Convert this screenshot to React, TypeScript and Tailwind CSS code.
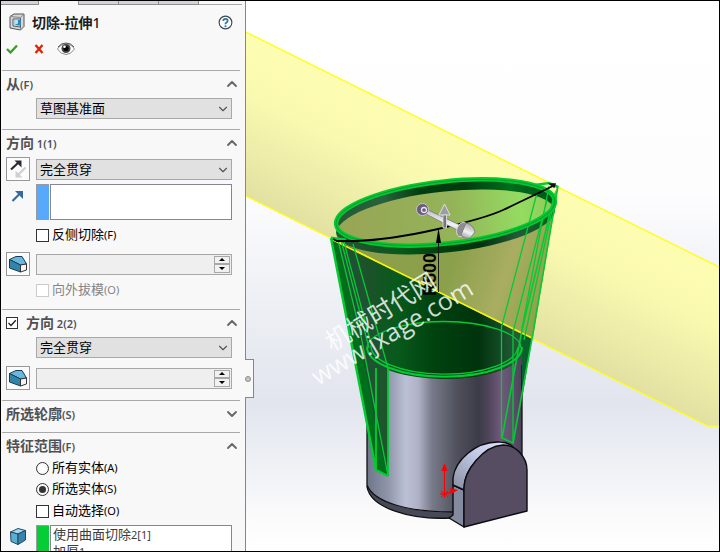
import type { ReactNode } from "react";
import { ChevronDown, ChevronUp } from "lucide-react";
import { clsx } from "clsx";

const fontStack = "font-['Noto_Sans','Noto_Sans_CJK_SC',sans-serif]";

function Suffix({ children }: { children: ReactNode }) {
  return <span className="text-[11px]">{children}</span>;
}

function Section({
  title,
  suffix,
  open = true,
  toggle = false,
  className,
  children,
}: {
  title: string;
  suffix: string;
  open?: boolean;
  toggle?: boolean;
  className?: string;
  children?: ReactNode;
}) {
  const Icon = open ? ChevronUp : ChevronDown;
  return (
    <section className={clsx("mr-[5px] ml-px border-t border-[#a9a9ab]", className)}>
      <div className="flex h-[26px] items-center pl-1">
        {toggle && <Tick label={title} checked className="mr-[8px] size-3" />}
        <h2 className="flex-1 pb-[2px] text-[14px] font-bold text-[#505054]">
          {title}
          <span className="text-[11px] font-semibold">{suffix}</span>
        </h2>
        <button type="button" aria-label={title} aria-expanded={open} className="text-[#68686b]">
          <Icon className="h-4 w-4" strokeWidth={2.8} />
        </button>
      </div>
      {children}
    </section>
  );
}

function Tick({
  id,
  label,
  checked,
  disabled,
  className,
}: {
  id?: string;
  label?: string;
  checked?: boolean;
  disabled?: boolean;
  className?: string;
}) {
  return (
    <span className={clsx("relative inline-flex shrink-0", className)}>
      <input
        id={id}
        type="checkbox"
        aria-label={label}
        defaultChecked={checked}
        disabled={disabled}
        className="size-full appearance-none border border-[#333] bg-white disabled:border-[#ccc]"
      />
      {checked && (
        <svg viewBox="0 0 12 12" className="pointer-events-none absolute inset-0" fill="none" stroke="#222" strokeWidth="1.3">
          <path d="M2.5 6 5 8.5 9.8 3.2" />
        </svg>
      )}
    </span>
  );
}

function CheckRow({ id, label, suffix, disabled }: { id: string; label: string; suffix: string; disabled?: boolean }) {
  return (
    <div className="flex h-5 items-center gap-[3px] pl-[34px]">
      <Tick id={id} disabled={disabled} className="size-[13px]" />
      <label htmlFor={id} className={disabled ? "text-[#858585]" : "text-black"}>
        {label}
        <Suffix>{suffix}</Suffix>
      </label>
    </div>
  );
}

function RadioRow({ id, label, suffix, checked }: { id: string; label: string; suffix: string; checked?: boolean }) {
  return (
    <div className="flex h-[18px] items-center gap-[3px] pl-[34px]">
      <input
        id={id}
        type="radio"
        name="scope"
        defaultChecked={checked}
        className="size-[13px] appearance-none rounded-full border border-[#333] bg-white bg-clip-content p-[2px] checked:bg-[#333]"
      />
      <label htmlFor={id}>
        {label}
        <Suffix>{suffix}</Suffix>
      </label>
    </div>
  );
}

function Row({ icon, children }: { icon?: ReactNode; children: ReactNode }) {
  return (
    <div className="flex items-center gap-[6px] pr-2 pl-1">
      <div className="flex w-6 shrink-0 justify-center">{icon}</div>
      {children}
    </div>
  );
}

function Picker({ label, value }: { label: string; value: string }) {
  return (
    <div className="relative h-[21px] min-w-0 flex-1">
      <select
        aria-label={label}
        className="block h-[21px] w-full appearance-none border border-[#a8a8a8] bg-[#e1e1e1] pl-[3px] text-[13px] leading-[19px] text-black"
      >
        <option>{value}</option>
      </select>
      <ChevronDown className="pointer-events-none absolute top-[4px] right-[2px] h-[14px] w-[14px] text-[#555]" />
    </div>
  );
}

function Spinner({ label }: { label: string }) {
  return (
    <div className="flex h-[21px] min-w-0 flex-1 border border-[#a8a8a8] bg-[#efefef] p-px">
      <input aria-label={label} disabled className="w-0 min-w-0 flex-1 bg-transparent" />
      <div className="flex w-4 shrink-0 flex-col">
        {["M5 1 8 4H2z", "M2 1h6L5 4z"].map((d, i) => (
          <button
            key={d}
            type="button"
            aria-label={i === 0 ? "增加" : "减少"}
            className="flex min-h-0 flex-1 items-center justify-center border border-[#a8a8a8] bg-[#f1f1f1]"
          >
            <svg viewBox="0 0 10 5" className="h-[5px] w-[10px]">
              <path d={d} />
            </svg>
          </button>
        ))}
      </div>
    </div>
  );
}

function ToolButton({ label, children }: { label: string; children: ReactNode }) {
  return (
    <button type="button" aria-label={label} className="flex size-6 items-center justify-center border border-[#98989b] bg-[#fcfcfc]">
      {children}
    </button>
  );
}

function ReverseIcon() {
  return (
    <svg viewBox="0 0 22 22" className="size-[22px]">
      <path d="M18.500 9.500 11 17" stroke="#cfcfcf" strokeWidth="2.200" />
      <path d="M8.500 12.500v7h7z" fill="#cfcfcf" />
      <path d="M4 11.500 11 5" stroke="#2c2c34" strokeWidth="2.200" />
      <path d="M7.500 2.500h7v7z" fill="#2c2c34" />
    </svg>
  );
}

function DirectionIcon() {
  return (
    <svg viewBox="0 0 14 14" className="size-[14px]">
      <path d="M1.500 12 8 5.500" stroke="#34699d" strokeWidth="2.200" />
      <path d="M4 2h8v8z" fill="#34699d" />
    </svg>
  );
}

function DraftIcon() {
  return (
    <svg viewBox="0 0 20 18" className="h-[18px] w-5 shrink-0" strokeLinejoin="round" stroke="#173d52">
      <path d="M1.500 4.500 8 1.500 14 1.500 18.500 9 12.500 10z" fill="#68b7df" />
      <path d="M1.500 4.500 12.500 10v7L1.500 13z" fill="#3185aa" />
      <path d="M12.500 10 18.500 9v6l-6 2z" fill="#f5f5f5" stroke="#333" />
    </svg>
  );
}

function BodyIcon() {
  return (
    <svg viewBox="0 0 18 19" className="h-[19px] w-[18px]" strokeLinejoin="round" stroke="#1d4a63">
      <path d="M1.500 5 9 1.500l7.500 2L9 7z" fill="#a5d8ef" />
      <path d="M1.500 5 9 7v10.500L2 14.500z" fill="#5badd2" />
      <path d="M9 7 16.500 3.500V13L9 17.500z" fill="#3b83aa" />
    </svg>
  );
}

function CutIcon() {
  return (
    <svg viewBox="0 0 16 18" className="h-[18px] w-4" strokeLinejoin="round">
      <path d="M1 3.500 5 1h10v12.500L11.500 17 1 15z" fill="#d5d7da" stroke="#555" />
      <path d="M1 3.500 11.500 4.500 15 1M11.500 17V4.500" stroke="#888" fill="none" />
      <path d="M4 6h7.500v8L4 13z" fill="#f7f7f7" stroke="#555" />
      <path d="M5.500 7H12v5.500L9 12.500 5.500 12z" fill="#2f86b2" />
      <path d="M5.500 7H9v3.500l-3.500 1.500z" fill="#b8e2f3" />
    </svg>
  );
}

function EyeIcon() {
  return (
    <svg viewBox="0 0 18 14" className="h-[14px] w-[18px]">
      <path d="M.5 7Q3.500 2 9 2t8.500 5Q14 12.500 9 12.500T.5 7z" fill="#fff" stroke="#8a8a8a" />
      <path d="M1 5Q4 1 9 1t8 4" fill="none" stroke="#555" />
      <circle cx="9" cy="6.500" r="4.500" fill="#444" />
      <circle cx="9" cy="6.500" r="2.600" fill="#050505" />
      <circle cx="7.500" cy="4.800" r="1.300" fill="#fff" />
    </svg>
  );
}

function PropertyPanel() {
  return (
    <aside className="relative flex w-[245px] shrink-0 flex-col border-r border-[#85858a] bg-[#f8f8f9] text-[13px] text-black">
      <div className="min-h-0 flex-1 overflow-hidden">
        <div className="flex h-[4px]">
          <div className="w-[38px] border-r border-b border-[#8e8e93] bg-[#d4d4d8]" />
          <div className="w-[39px]" />
          <div className="w-[41px] border-x border-b border-[#8e8e93] bg-[#d4d4d8]" />
          <div className="w-[40px] border-r border-b border-[#8e8e93] bg-[#d4d4d8]" />
          <div className="w-[40px] border-r border-b border-[#8e8e93] bg-[#d4d4d8]" />
          <div className="mr-[3px] flex-1 border-b border-[#a9a9ab]" />
        </div>
        <div className="flex h-[34px] items-center pr-3 pl-2">
          <CutIcon />
          <h1 className="ml-[7px] flex-1 text-[14px] font-bold text-[#1c1c20]">
            切除-拉伸<span className="font-medium">1</span>
          </h1>
          <button type="button" aria-label="帮助">
            <svg viewBox="0 0 16 16" className="size-[15px]">
              <circle cx="8" cy="8" r="6.800" fill="#fafafa" stroke="#3a4652" strokeWidth="1.200" />
              <path d="M5.700 6.300Q5.700 4.200 8 4.200t2.300 1.900Q10.300 7.300 9 8T8 9.900" fill="none" stroke="#2874a6" strokeWidth="1.800" />
              <circle cx="8" cy="12" r="1.100" fill="#2874a6" />
            </svg>
          </button>
        </div>
        <div className="flex h-[31px] items-start gap-4 pt-[3px] pl-[5px]">
          <button type="button" aria-label="确定" className="flex h-[14px] items-center">
            <svg viewBox="0 0 12 10" className="h-[10px] w-3">
              <path d="M1 5 4.500 8.500 11 1.500" fill="none" stroke="#35a01e" strokeWidth="2.300" />
            </svg>
          </button>
          <button type="button" aria-label="取消" className="flex h-[14px] items-center">
            <svg viewBox="0 0 10 10" className="size-[10px]">
              <path d="M1.500 1 8.500 9M8.500 1 1.500 9" stroke="#df2307" strokeWidth="2.300" />
            </svg>
          </button>
          <button type="button" aria-label="预览" className="-ml-[3px]">
            <EyeIcon />
          </button>
        </div>

        <Section title="从" suffix="(F)" className="pb-[10px]">
          <div className="pt-px">
            <Row>
              <Picker label="从" value="草图基准面" />
            </Row>
          </div>
        </Section>

        <Section title="方向" suffix=" 1(1)" className="pb-[9px]">
          <div className="pt-px">
            <Row
              icon={
                <ToolButton label="反向">
                  <ReverseIcon />
                </ToolButton>
              }
            >
              <Picker label="方向 1" value="完全贯穿" />
            </Row>
          </div>
          <div className="mt-[3px] flex gap-[6px] pr-2 pl-1">
            <div className="flex w-6 shrink-0 justify-center pt-[5px]">
              <DirectionIcon />
            </div>
            <div className="flex h-9 min-w-0 flex-1 gap-px">
              <div className="w-[13px] shrink-0 border-t border-l border-[#9a9aa0] bg-[#57a9fc]" />
              <input aria-label="拉伸方向" className="w-0 min-w-0 flex-1 border border-[#858594] bg-white" />
            </div>
          </div>
          <div className="mt-[5px] mb-[7px]">
            <CheckRow id="flip" label="反侧切除" suffix="(F)" />
          </div>
          <Row
            icon={
              <ToolButton label="拔模开关">
                <DraftIcon />
              </ToolButton>
            }
          >
            <Spinner label="拔模角度" />
          </Row>
          <div className="mt-1">
            <CheckRow id="outward" label="向外拔模" suffix="(O)" disabled />
          </div>
        </Section>

        <Section title="方向" suffix=" 2(2)" toggle className="pb-[10px]">
          <div className="pt-px pb-2">
            <Row>
              <Picker label="方向 2" value="完全贯穿" />
            </Row>
          </div>
          <Row
            icon={
              <ToolButton label="拔模开关 2">
                <DraftIcon />
              </ToolButton>
            }
          >
            <Spinner label="拔模角度 2" />
          </Row>
        </Section>

        <Section title="所选轮廓" suffix="(S)" open={false} className="pb-[5px]" />

        <Section title="特征范围" suffix="(F)">
          <div className="flex flex-col gap-[3px]">
            <RadioRow id="all" label="所有实体" suffix="(A)" />
            <RadioRow id="selected" label="所选实体" suffix="(S)" checked />
            <CheckRow id="auto" label="自动选择" suffix="(O)" />
          </div>
          <div className="mt-1 flex gap-[6px] pr-2 pl-1">
            <div className="flex w-6 shrink-0 justify-center pt-[2px]">
              <BodyIcon />
            </div>
            <div className="flex h-[60px] min-w-0 flex-1 gap-px">
              <div className="w-[13px] shrink-0 border-t border-l border-[#9a9aa0] bg-[#06cc36]" />
              <ul className="flex-1 border border-[#858594] bg-white pl-[2px] leading-4 text-[#3c3c3c]">
                <li>
                  使用曲面切除<Suffix>2[1]</Suffix>
                </li>
                <li>
                  加厚<Suffix>1</Suffix>
                </li>
              </ul>
            </div>
          </div>
        </Section>
      </div>
      <button
        type="button"
        aria-label="收起面板"
        className="absolute top-[358px] -right-[9px] z-10 flex h-[39px] w-[9px] items-center border border-l-0 border-[#85858a] bg-[#f8f8f9]"
      >
        <span className="size-[6px] rounded-full border border-[#8c8c8c] bg-[#c6c6c6]" />
      </button>
    </aside>
  );
}

// Opening of the tapered cut; used for the rim and, shifted down, for the wall thickness.
function Rim({ dy = 0, rx = 110, ry = 31, ...rest }: { dy?: number; rx?: number; ry?: number; fill?: string; stroke?: string; strokeWidth?: number; clipPath?: string }) {
  return (
    <g clipPath={rest.clipPath}>
      <ellipse
        cx="445.500"
        cy={212.5 + dy}
        rx={rx}
        ry={ry}
        transform={`rotate(-6.200 445.500 ${212.5 + dy})`}
        fill={rest.fill ?? "none"}
        stroke={rest.stroke}
        strokeWidth={rest.strokeWidth}
      />
    </g>
  );
}

function ModelView() {
  return (
    <svg viewBox="246 1 473 550" preserveAspectRatio="xMidYMid slice" className="size-full" fill="none">
      <defs>
        <linearGradient id="sky" x1="0" y1="0" x2="0" y2="1">
          <stop offset="0" stopColor="#fff" />
          <stop offset=".35" stopColor="#fdfdfe" />
          <stop offset=".52" stopColor="#f0f1f6" />
          <stop offset=".73" stopColor="#e2e5ee" />
          <stop offset=".84" stopColor="#eef0f5" />
          <stop offset=".93" stopColor="#fafafb" />
          <stop offset="1" stopColor="#fff" />
        </linearGradient>
        <linearGradient id="plane" gradientUnits="userSpaceOnUse" x1="430" y1="124" x2="360" y2="265">
          <stop offset="0" stopColor="#fdfdb2" />
          <stop offset=".35" stopColor="#faf9b0" />
          <stop offset="1" stopColor="#dfdea0" />
        </linearGradient>
        <linearGradient id="metal" gradientUnits="userSpaceOnUse" x1="367" y1="0" x2="522" y2="0">
          <stop offset="0" stopColor="#70768a" />
          <stop offset=".14" stopColor="#9197aa" />
          <stop offset=".25" stopColor="#bcc0d6" />
          <stop offset=".33" stopColor="#b0b2c6" />
          <stop offset=".42" stopColor="#777a89" />
          <stop offset=".58" stopColor="#50515d" />
          <stop offset=".72" stopColor="#3c3b48" />
          <stop offset=".79" stopColor="#51465c" />
          <stop offset=".86" stopColor="#70597a" />
          <stop offset=".93" stopColor="#5f526e" />
          <stop offset="1" stopColor="#494358" />
        </linearGradient>
        <linearGradient id="deep" gradientUnits="userSpaceOnUse" x1="335" y1="0" x2="555" y2="0">
          <stop offset="0" stopColor="#245a34" />
          <stop offset=".15" stopColor="#1c5229" />
          <stop offset=".28" stopColor="#085a1c" />
          <stop offset=".45" stopColor="#00420f" />
          <stop offset=".65" stopColor="#00330c" />
          <stop offset=".82" stopColor="#245a38" />
          <stop offset="1" stopColor="#00601a" />
        </linearGradient>
        <linearGradient id="wallBack" gradientUnits="userSpaceOnUse" x1="335" y1="0" x2="555" y2="0">
          <stop offset="0" stopColor="#245a34" />
          <stop offset=".23" stopColor="#28613d" />
          <stop offset=".4" stopColor="#003e10" />
          <stop offset=".6" stopColor="#003b0f" />
          <stop offset=".8" stopColor="#006d1c" />
          <stop offset="1" stopColor="#00551a" />
        </linearGradient>
        <linearGradient id="olive" gradientUnits="userSpaceOnUse" x1="335" y1="0" x2="555" y2="0">
          <stop offset="0" stopColor="#98a455" />
          <stop offset=".55" stopColor="#94b458" />
          <stop offset=".85" stopColor="#94dc62" />
          <stop offset="1" stopColor="#8fc957" />
        </linearGradient>
        <linearGradient id="oliveFront" gradientUnits="userSpaceOnUse" x1="350" y1="230" x2="555" y2="300">
          <stop offset="0" stopColor="#8b9f4b" />
          <stop offset=".5" stopColor="#8ba04b" />
          <stop offset=".75" stopColor="#a9ad62" />
          <stop offset="1" stopColor="#87a043" />
        </linearGradient>
        <linearGradient id="bossSide" x1="0" y1="1" x2="1" y2="0">
          <stop offset="0" stopColor="#878ea1" />
          <stop offset=".6" stopColor="#c6cdea" />
          <stop offset="1" stopColor="#e1e6fa" />
        </linearGradient>
        <linearGradient id="shaft" x1="0" y1="1" x2=".4" y2="0">
          <stop offset="0" stopColor="#8d8d92" />
          <stop offset=".5" stopColor="#f2f2f4" />
          <stop offset="1" stopColor="#aaaab0" />
        </linearGradient>
        <clipPath id="rimClip">
          <ellipse cx="445.500" cy="212.500" rx="110" ry="31" transform="rotate(-6.200 445.500 212.500)" />
        </clipPath>
      </defs>

      <rect x="246" y="1" width="473" height="550" fill="url(#sky)" />
      <path d="M246 32 719 267V426h-11L246 196z" fill="url(#plane)" />
      <path d="M246 32 719 267M719 426h-11L246 196" stroke="#ffff12" strokeWidth="1.300" />

      {/* cylinder */}
      <path d="M367 349V487C371 507 405 518 444 519L522 490V349A77 27 0 0 0 367 349z" fill="url(#metal)" />
      <path d="M367 485C374 503 410 512 453 513v5C413 520 373 509 368 491z" fill="#484957" />
      <path d="M367 425V487C371 508 410 520 450 518M367 485C374 503 410 512 453 512M522 365V456" stroke="#111" strokeWidth="1.300" />

      {/* tapered cut, lower part */}
      <path d="M331 239 522 334 522 350A77 27 0 0 1 388 370L388 476 376 470z" fill="url(#deep)" />
      <path d="M331 239 338 242 388 476 376 470z" fill="#006f1c" />
      <path d="M344 241 353 244 388 368V476L376 430z" fill="#1e5230" />
      <path d="M376 368 388 372V476L376 420z" fill="#1d552d" />
      <path d="M522 334 533 332 522 400z" fill="#09602a" />

      {/* tapered cut seen through the plane */}
      <path d="M334 239 380 248 460 247 540 220 558 186 533 338 522 334z" fill="url(#oliveFront)" />
      <Rim dy={9} fill="url(#deep)" />
      <Rim fill="url(#wallBack)" />
      <Rim dy={10} fill="url(#olive)" clipPath="url(#rimClip)" />
      <path d="M331 239 534 339" stroke="#f6f600" strokeWidth="1.500" />

      <g stroke="#05ca35" strokeWidth="1.300">
        <path d="M367 349A77 27 0 0 1 521 348" />
        <path d="M367 347A77 29.500 0 0 0 522 347" strokeWidth="2" />
        <path d="M371 345A73 28 0 0 0 518 347" />
        <path d="M376 368V470M388 368V476" strokeWidth="1.800" />
        <path d="M338 240 361 336 388 476M341 240 369 348M344 242 370 340M353 244 388 368" />
        <path d="M331 238 376 470 388 476" strokeWidth="2.400" />
        <path d="M331 238 346 240" strokeWidth="3" />
        <path d="M558 186 533 333 513 443 502 438 522 330 553 200" strokeWidth="1.600" />
        <path d="M537 193 501.500 327V438M547 200 513 332V443M553 206 524 340M549 186 522 328" />
        <path d="M535 185 549 183 558 187" strokeWidth="2.500" />
      </g>
      <Rim stroke="#04c832" strokeWidth={4.5} />
      <Rim stroke="#0a8127" strokeWidth={0.6} />

      {/* sketch arc and its radius dimension */}
      <path d="M333 239 337 241 355 241Q390 240 438 229T503 210 555 185" stroke="#000" strokeWidth="1.800" />
      <path d="M550 184 555 184 554 187z" fill="#111" stroke="#111" strokeWidth="1.500" />
      <path d="M438.500 292V231" stroke="#1b1b1b" />
      <path d="M438.500 228 436 243h5z" fill="#000" />
      <text transform="translate(436 296) rotate(-90)" fontSize="18" fontWeight="700" fill="#060606" className="font-['Liberation_Sans',sans-serif]">
        R500
      </text>

      {/* drag handle */}
      <g stroke="#77777d" strokeWidth=".8">
        <path d="M426 209 462 226 459 231 424 213z" fill="url(#shaft)" />
        <circle cx="422.500" cy="209.500" r="6" fill="#695c7d" stroke="#d7d3df" />
        <circle cx="424" cy="210" r="2.500" fill="none" stroke="#e8e4f0" strokeWidth="1.300" />
        <ellipse cx="462" cy="229.500" rx="5" ry="7.500" fill="#8c8c92" stroke="#dcdce0" transform="rotate(24 462 229.500)" />
        <path d="M466 223Q473 224 475 232L470 238Q463 239 461 235z" fill="url(#shaft)" />
        <path d="M444.500 204 450 215H439z" fill="#9c9ca2" stroke="#ececef" />
        <path d="M443 215h3.500v13H443z" fill="#77777d" stroke="#e5e5e8" />
      </g>

      {/* boss */}
      <g stroke="#0c0c10" strokeWidth="1.400" strokeLinejoin="round">
        <path d="M453 485 464 490V527L449 518 453 515z" fill="#858b9e" />
        <path d="M453 485V478C455 461 475 441 500 442Q508 442 513 447C484 447 464 467 464 490z" fill="url(#bossSide)" />
        <path d="M464 527V488C464 471 483 446 503 445 517 445 527 458 527 470V511z" fill="#574d63" />
      </g>

      {/* origin */}
      <g stroke="#f00" fill="#f00">
        <path d="M444.500 494V468M444.500 494 454 491M441 491 448 497M448 491 441 497M444.500 490V498M440 494h9" />
        <path d="M444.500 463 447.500 471h-6zM458 490 451 494 450 488z" stroke="none" />
      </g>

      <g fill="#fff" fillOpacity=".82" className="font-['Open_Sans','Noto_Sans_CJK_SC',sans-serif]">
        <text transform="translate(332 352) rotate(-31.500)" fontSize="25">
          机械时代网
        </text>
        <text transform="translate(318 386) rotate(-30.500)" fontSize="25">
          www.jxage.com
        </text>
      </g>
    </svg>
  );
}

export default function App() {
  return (
    <div className={clsx("flex h-screen overflow-hidden border border-black bg-white", fontStack)}>
      <PropertyPanel />
      <main className="min-w-0 flex-1">
        <ModelView />
      </main>
    </div>
  );
}
